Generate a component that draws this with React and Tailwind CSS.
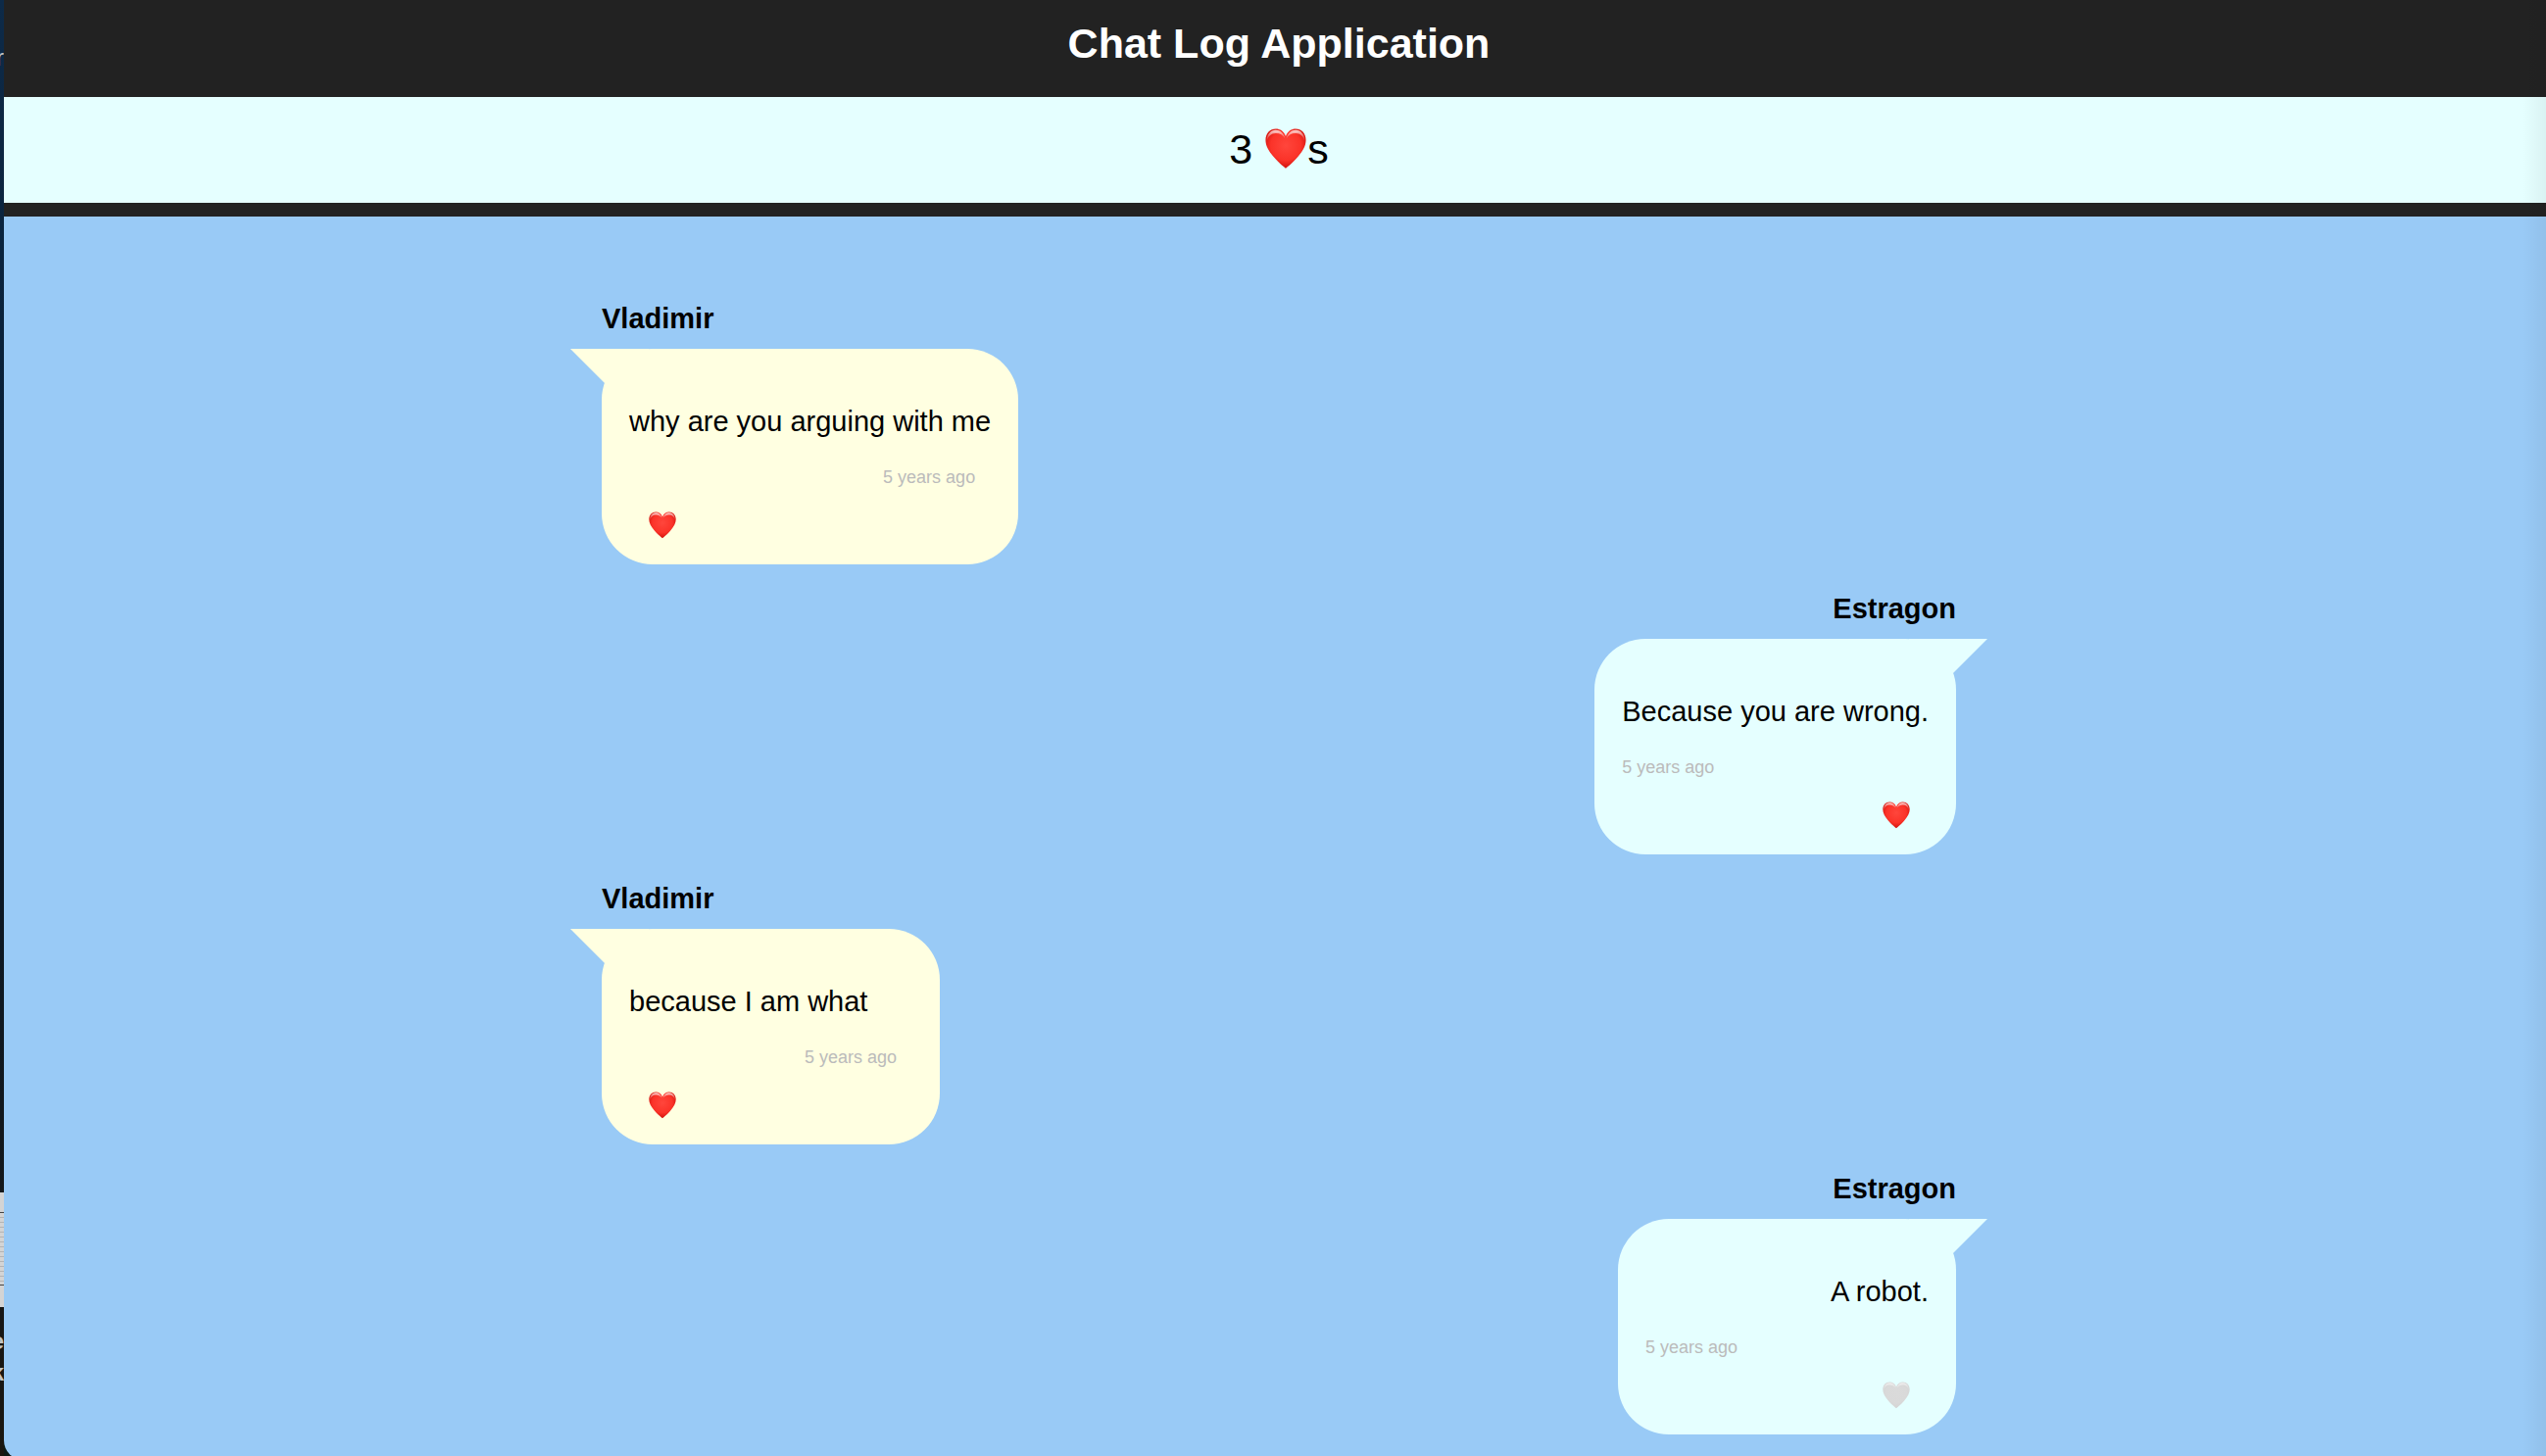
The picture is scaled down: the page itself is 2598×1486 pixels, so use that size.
const messages = [
  { id: 1, sender: 'Vladimir', body: 'why are you arguing with me', time: '5 years ago', liked: true, local: true },
  { id: 2, sender: 'Estragon', body: 'Because you are wrong.', time: '5 years ago', liked: true, local: false },
  { id: 3, sender: 'Vladimir', body: 'because I am what', time: '5 years ago', liked: true, local: true },
  { id: 4, sender: 'Estragon', body: 'A robot.', time: '5 years ago', liked: false, local: false },
];

const HEART =
  'M14 27.3 C13.4 26.6 9.6 24 5.6 19.2 C2.2 15.2 0.3 11.8 0.3 8 C0.3 3.4 3.4 0.4 7.2 0.4 C10.2 0.4 12.8 2 14 5.4 C15.2 2 17.8 0.4 20.8 0.4 C24.6 0.4 27.7 3.4 27.7 8 C27.7 11.8 25.8 15.2 22.4 19.2 C18.4 24 14.6 26.6 14 27.3 Z';

function Heart({ id, liked, className }) {
  return (
    <svg viewBox="0 0 28 28" className={className} aria-hidden="true">
      <defs>
        <radialGradient id={`${id}-fill`} cx="0.5" cy="0.42" r="0.62">
          <stop offset="0" stopColor={liked ? '#ff463c' : '#dadada'} />
          <stop offset="0.6" stopColor={liked ? '#fb3329' : '#d9d9d9'} />
          <stop offset="1" stopColor={liked ? '#c80a05' : '#d3d3d3'} />
        </radialGradient>
        <linearGradient id={`${id}-shine`} x1="0" y1="0" x2="0" y2="1">
          <stop offset="0" stopColor="#fff" stopOpacity={liked ? 0.8 : 0.6} />
          <stop offset="0.45" stopColor="#fff" stopOpacity={liked ? 0.4 : 0.3} />
          <stop offset="1" stopColor="#fff" stopOpacity="0" />
        </linearGradient>
      </defs>
      <path d={HEART} fill={`url(#${id}-fill)`} />
      <path
        d="M1.2 9 C0.9 4.2 3.8 1.2 7.2 1.2 C10.2 1.2 12.6 3.2 13.6 7 C12 4.6 10 3.4 7.3 3.4 C4.3 3.4 1.9 5.4 1.2 9 Z"
        fill={`url(#${id}-shine)`}
      />
      <path
        d="M26.8 9 C27.1 4.2 24.2 1.2 20.8 1.2 C17.8 1.2 15.4 3.2 14.4 7 C16 4.6 18 3.4 20.7 3.4 C23.7 3.4 26.1 5.4 26.8 9 Z"
        fill={`url(#${id}-shine)`}
      />
    </svg>
  );
}

function ChatEntry({ message }) {
  const { id, sender, body, time, liked, local } = message;
  return (
    <article className={local ? 'flex flex-col items-start' : 'flex flex-col items-end'}>
      <h2 className="mb-3.5 text-[29px] leading-[34px] font-bold">{sender}</h2>
      <section
        className={
          local
            ? 'relative flex min-w-[345px] flex-col rounded-[52px] bg-[#ffffe1] px-7 pt-[57px] pb-[27px]'
            : 'relative flex min-w-[345px] flex-col rounded-[52px] bg-[#e5ffff] px-7 pt-[57px] pb-[27px] text-right'
        }
      >
        <div
          className={
            local
              ? 'absolute top-0 -left-8 size-20 bg-[#ffffe1] [clip-path:polygon(0_0,100%_0,100%_100%)]'
              : 'absolute top-0 -right-8 size-20 bg-[#e5ffff] [clip-path:polygon(0_0,100%_0,0_100%)]'
          }
        />
        <p className="relative text-[29px] leading-[34px]">{body}</p>
        <p
          className={
            local
              ? 'mt-7 self-end pr-4 text-lg leading-6 text-[#bbb]'
              : 'mt-7 self-start text-lg leading-6 text-[#bbb]'
          }
        >
          {time}
        </p>
        <button
          type="button"
          aria-label={liked ? 'Unlike message' : 'Like message'}
          aria-pressed={liked}
          className={local ? 'mx-5 mt-[23px] self-start' : 'mx-[19px] mt-[23px] self-end'}
        >
          <Heart id={`heart-${id}`} liked={liked} className="-mb-px size-7" />
        </button>
      </section>
    </article>
  );
}

/* Sliver of the desktop that shows beside the window */
function DesktopEdge() {
  return (
    <div
      aria-hidden="true"
      className="flex w-1 shrink-0 flex-col items-end overflow-hidden bg-linear-to-b from-[#0d2a48] via-[#07182a] to-[#1a1610] text-2xl leading-6 font-bold text-[#c4c4c4]"
    >
      <span className="mt-[47px] font-normal">r</span>
      <div className="mt-[1146px] flex h-[117px] w-full shrink-0 flex-col bg-[#d4d4d4] pt-5 pb-[22px]">
        <div className="grow border-y border-[#444] bg-[repeating-linear-gradient(#d4d4d4_0_4px,#b4b4b4_4px_5px)]" />
      </div>
      <span className="mt-[23px]">e</span>
      <span className="mt-2">k</span>
    </div>
  );
}

export default function App() {
  const likes = messages.filter((m) => m.liked).length;
  return (
    <div className="relative flex h-screen overflow-hidden bg-[#0b1a16] font-['Liberation_Sans',Arial,sans-serif] text-black">
      <DesktopEdge />
      <div className="-mr-2 -mb-1 flex grow flex-col overflow-hidden rounded-bl-[20px] bg-[#99caf6]">
        <header className="bg-[#222] pb-3.5 text-center">
          <h1 className="pt-[19px] pb-[30px] text-[43px] leading-[50px] font-bold text-white">Chat Log Application</h1>
          <section className="flex h-[108px] items-center justify-center bg-[#e5ffff] pb-0.5 text-[43px] leading-[50px]">
            <span className="whitespace-pre">{likes} </span>
            <Heart id="heart-total" liked className="mx-px size-[42px]" />
            <span>s</span>
          </section>
        </header>
        <main className="mx-auto flex w-full max-w-[1382px] flex-col gap-7 pt-[87px]">
          {messages.map((message) => (
            <ChatEntry key={message.id} message={message} />
          ))}
        </main>
      </div>
      <div className="pointer-events-none absolute inset-y-0 right-0 w-6 bg-linear-to-r from-black/0 to-black/5" />
    </div>
  );
}
